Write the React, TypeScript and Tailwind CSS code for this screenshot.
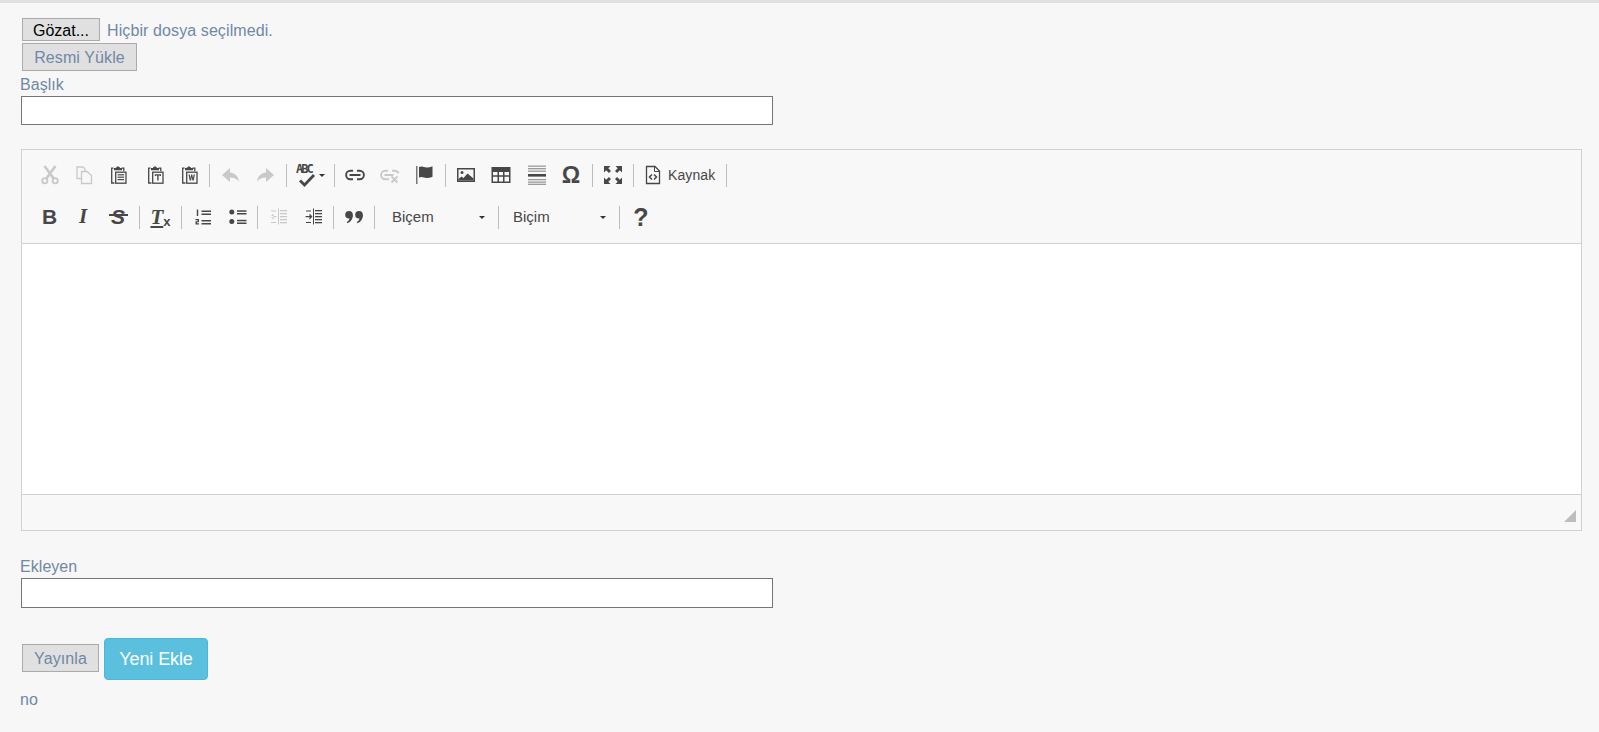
import type { ReactNode } from 'react';

const DARK = '#474747';
const OFF = '#c9c9c9';

function Icon({ color = DARK, children }: { color?: string; children: ReactNode }) {
  return (
    <svg width="20" height="20" viewBox="0 0 20 20" fill={color} stroke="none">
      {children}
    </svg>
  );
}

function Clipboard({ children }: { children: ReactNode }) {
  return (
    <Icon>
      <path d="M4.500 3.200H2.700v14.800h2.800" fill="none" stroke={DARK} strokeWidth="1.300" />
      <path d="M12.500 3.200h2.300v3" fill="none" stroke={DARK} strokeWidth="1.300" />
      <path d="M5 5.200V3h2C7.400 1 10.600 1 11 3h2v2.200z" />
      <rect x="6.700" y="7.200" width="10.300" height="11" fill="none" stroke={DARK} strokeWidth="1.300" />
      {children}
    </Icon>
  );
}

function Lines({ color = DARK, x = 9, w = 9, h = 1.3, ys = [5, 8, 11, 14] }: { color?: string; x?: number; w?: number; h?: number; ys?: number[] }) {
  return (
    <>
      {ys.map((y) => (
        <rect key={y} x={x} y={y} width={w} height={h} fill={color} />
      ))}
    </>
  );
}

const icons: Record<string, ReactNode> = {
  cut: (
    <Icon color={OFF}>
      <path d="M4.500 1 14 14M15.500 1 6 14" fill="none" stroke={OFF} strokeWidth="2.600" />
      <circle cx="4.800" cy="15.800" r="2.600" fill="none" stroke={OFF} strokeWidth="1.800" />
      <circle cx="15.200" cy="15.800" r="2.600" fill="none" stroke={OFF} strokeWidth="1.800" />
    </Icon>
  ),
  copy: (
    <Icon color={OFF}>
      <path d="M7.500 13.500H3V2h6l2 2v2" fill="none" stroke={OFF} strokeWidth="1.300" />
      <path d="M7.500 6.500H13l4.500 4v8h-10z" fill="none" stroke={OFF} strokeWidth="1.300" />
    </Icon>
  ),
  paste: (
    <Clipboard>
      <Lines x={8.600} w={6.500} h={1.200} ys={[9.200, 11.600, 14]} />
    </Clipboard>
  ),
  pasteText: (
    <Clipboard>
      <path d="M8.800 9.300h6.200V11h-1.100v-.5h-1.300v5h-1.400v-5h-1.300v.5H8.800z" />
    </Clipboard>
  ),
  pasteWord: (
    <Clipboard>
      <path d="M8.500 9.600h1.300l.6 3.900.7-3.900h1.200l.7 3.900.6-3.900h1.300l-1.200 5.800h-1.300l-.7-3.400-.7 3.400H9.700z" />
    </Clipboard>
  ),
  undo: (
    <Icon color={OFF}>
      <path d="M9 3 1 10l8 7v-4.500c3.500-.2 6.200.8 9 4-.8-5-3.800-8.500-9-9z" />
    </Icon>
  ),
  redo: (
    <Icon color={OFF}>
      <path d="M11 3l8 7-8 7v-4.500c-3.500-.2-6.200.8-9 4 .8-5 3.800-8.500 9-9z" />
    </Icon>
  ),
  link: (
    <Icon>
      <path d="M8 5.800H5.300a4.200 4.200 0 0 0 0 8.400H8M12 5.800h2.700a4.200 4.200 0 0 1 0 8.400H12" fill="none" stroke={DARK} strokeWidth="1.900" />
      <rect x="4.500" y="9" width="11" height="2" />
    </Icon>
  ),
  unlink: (
    <Icon color={OFF}>
      <path d="M8 5.800H5.300a4.200 4.200 0 0 0 0 8.400H9M12 5.800h2.700a4.200 4.200 0 0 1 3.800 2.500" fill="none" stroke={OFF} strokeWidth="1.900" />
      <rect x="4.500" y="9" width="9" height="2" />
      <path d="m11.500 11.500 6 6m0-6-6 6" fill="none" stroke={OFF} strokeWidth="1.800" />
    </Icon>
  ),
  flag: (
    <Icon>
      <rect x="1" y="1" width="1.500" height="18" fill="#777" />
      <path d="M4 2c3-1.400 5 .2 7.500.4 2 .1 4-.4 6-1.200v10.600c-2 .8-4 1.300-6 1.200-2.500-.2-4.500-1.800-7.500-.4z" />
    </Icon>
  ),
  image: (
    <Icon>
      <path d="M1 3h18v14H1z" />
      <rect x="2.500" y="4.500" width="15" height="11" fill="#f8f8f8" />
      <circle cx="6" cy="7.500" r="1.500" />
      <path d="M2.500 15.500v-1.500l3-2.500 2 1.500 4-4.500 6 5v2z" />
    </Icon>
  ),
  table: (
    <Icon>
      <path d="M0.500 2h19v16h-19z" />
      <path d="M2 7h4.500v3.200H2zM8 7h4v3.200H8zM13.500 7H18v3.200h-4.500zM2 11.700h4.500v4.800H2zM8 11.700h4v4.800H8zM13.500 11.700H18v4.800h-4.500z" fill="#f8f8f8" />
    </Icon>
  ),
  hr: (
    <Icon>
      <Lines color="#9a9a9a" x={1} w={18} ys={[0.500, 3, 5.500, 14, 16.500, 18.700]} />
      <rect x="1" y="9" width="18" height="2.600" />
    </Icon>
  ),
  max: (
    <Icon>
      <path d="M1 1h6.500L5.300 3.200 8 5.900 5.900 8 3.200 5.300 1 7.500zM19 1v6.500l-2.200-2.200L14.100 8 12 5.900l2.700-2.700L12.500 1zM1 19v-6.500l2.200 2.200L5.900 12 8 14.100l-2.700 2.700L7.500 19zM19 19h-6.500l2.200-2.200L12 14.100l2.100-2.100 2.700 2.700 2.200-2.200z" />
    </Icon>
  ),
  source: (
    <Icon>
      <path d="M3.500 1.500h8.500l4.500 4.500v12.500h-13z" fill="none" stroke={DARK} strokeWidth="1.300" />
      <path d="M11.500 1.500v5h5" fill="none" stroke={DARK} strokeWidth="1" />
      <path d="M9 9.500 6.500 12 9 14.500M11 9.500l2.500 2.500-2.500 2.500" fill="none" stroke={DARK} strokeWidth="1.500" />
    </Icon>
  ),
  ol: (
    <Icon>
      <Lines x={8.500} w={9.500} h={1.500} ys={[3.500, 6.500, 13, 16]} />
      <rect x="3.800" y="2.500" width="1.400" height="6.500" />
      <path d="M2.500 12h3.500v3.200H3.900v1.100H6v1.200H2.500v-3.300h2.200v-1H2.500z" />
    </Icon>
  ),
  ul: (
    <Icon>
      <circle cx="3.800" cy="5" r="2.500" />
      <circle cx="3.800" cy="14.500" r="2.500" />
      <Lines x={9} w={9.500} h={1.500} ys={[3.300, 6, 12.800, 15.500]} />
    </Icon>
  ),
  outdent: (
    <Icon color={OFF}>
      <Lines color={OFF} x={11} w={7} ys={[3, 6, 9, 12, 15]} />
      <rect x="9" y="1.500" width="1" height="16" fill={OFF} />
      <path d="M1.500 9h6v1.300h-6zM4.500 6.500 1.500 9.600l3 3.100zM2 3.500h5v1H2zM2 15h5v1H2z" fill={OFF} />
    </Icon>
  ),
  indent: (
    <Icon>
      <Lines x={11} w={7} ys={[3, 6, 9, 12, 15]} />
      <rect x="9" y="1.500" width="1" height="16" />
      <path d="M1.500 9h5v1.300h-5zM5.500 6.500l3 3.100-3 3.100zM2 3.500h5v1H2zM2 15h5v1H2z" />
    </Icon>
  ),
  quote: (
    <Icon>
      <circle cx="5" cy="7.800" r="3.800" />
      <path d="M8.800 7.800c.2 4-1.800 7.200-5.300 8.400l-.8-1.300c2-1 2.800-2.500 2.800-4.500z" />
      <circle cx="15" cy="7.800" r="3.800" />
      <path d="M18.800 7.800c.2 4-1.800 7.200-5.300 8.400l-.8-1.300c2-1 2.800-2.500 2.800-4.500z" />
    </Icon>
  ),
  check: (
    <Icon>
      <path d="M3 12.500 7.500 17 17 7" fill="none" stroke={DARK} strokeWidth="2.800" />
    </Icon>
  ),
};

function Sep() {
  return <span className="w-px h-[23px] bg-[#bcbcbc] shrink-0" />;
}

function Tool({ w, name }: { w: string; name: string }) {
  return <span className={`${w} flex items-center justify-center shrink-0`}>{icons[name]}</span>;
}

function Glyph({ w, className, children }: { w: string; className: string; children: ReactNode }) {
  return <span className={`${w} flex items-center justify-center shrink-0 text-[#474747] ${className}`}>{children}</span>;
}

function Caret() {
  return <span className="w-0 h-0 border-x-[3px] border-x-transparent border-t-[3px] border-t-[#333]" />;
}

function Combo({ label, w }: { label: string; w: string }) {
  return (
    <span className={`${w} flex items-center justify-between shrink-0 pr-[13px] text-[15px] text-[#474747]`}>
      {label}
      <Caret />
    </span>
  );
}

const labelCls = 'block -ml-px text-[16px] tracking-[0.05px] leading-[27px] h-[25px]';
const inputCls = 'block w-[752px] bg-white border border-[#767676]';
const btnCls = 'border border-[#ababab] bg-[#e0e0e0] text-[16px] tracking-[0.1px] pt-[2px] px-0';

export default function App() {
  return (
    <div className="h-[732px] overflow-hidden bg-[#f7f7f7] border-t-[3px] border-[#e0e0e0] font-['Liberation_Sans',Arial,sans-serif] text-[#7088a6]">
      <div className="pl-[21px] pr-[17px] pt-[15px]">
        <div className="flex items-center pl-px h-[23px] gap-[7px]">
          <button className="w-[78px] h-[23px] pt-[2px] border border-[#ababab] bg-[#e0e0e0] text-[16px] leading-none text-black">Gözat...</button>
          <span className="text-[16px] tracking-[0.1px] pt-[2px]">Hiçbir dosya seçilmedi.</span>
        </div>
        <div className="pl-px mt-[2px]">
          <button className={`${btnCls} h-[28px] w-[115px]`}>Resmi Yükle</button>
        </div>
        <label className={labelCls}>Başlık</label>
        <div className={`${inputCls} h-[29px]`} />

        <div className="mt-[24px] h-[382px] flex flex-col border border-[#d1d1d1] bg-[#f8f8f8]">
          <div className="h-[94px] pt-[4px] pl-[10px] shrink-0 border-b border-[#d1d1d1]">
            <div className="flex items-center h-[42px]">
              <Tool w="w-[36px]" name="cut" />
              <Tool w="w-[31px]" name="copy" />
              <Tool w="w-[40px]" name="paste" />
              <Tool w="w-[33px]" name="pasteText" />
              <Tool w="w-[35px]" name="pasteWord" />
              <span className="w-[2px] shrink-0" />
              <Sep />
              <Tool w="w-[41px]" name="undo" />
              <Tool w="w-[28px]" name="redo" />
              <span className="w-[7px] shrink-0" />
              <Sep />
              <span className="w-[47px] h-[24px] shrink-0 relative">
                <span className="text-[12px] leading-none font-['DejaVu_Sans_Mono',monospace] font-bold tracking-[-2px] text-[#474747] absolute top-0 left-[9px]">ABC</span>
                <span className="absolute left-[10px] top-[5px]">{icons.check}</span>
                <span className="absolute left-[32px] top-[11px] flex"><Caret /></span>
              </span>
              <Sep />
              <Tool w="w-[40px]" name="link" />
              <Tool w="w-[30px]" name="unlink" />
              <Tool w="w-[40px]" name="flag" />
              <Sep />
              <Tool w="w-[40px]" name="image" />
              <Tool w="w-[30px]" name="table" />
              <Tool w="w-[41px]" name="hr" />
              <Glyph w="w-[28px]" className="text-[23px] leading-none font-bold">Ω</Glyph>
              <span className="w-[7px] shrink-0" />
              <Sep />
              <Tool w="w-[40px]" name="max" />
              <Sep />
              <span className="w-[92px] shrink-0 flex items-center pl-[9px] gap-[5px] text-[14px] tracking-[0.1px] text-[#474747]">
                {icons.source}
                Kaynak
              </span>
              <Sep />
            </div>
            <div className="flex items-center h-[42px]">
              <Glyph w="w-[35px]" className="text-[21px] font-bold">B</Glyph>
              <Glyph w="w-[32px]" className="text-[21px] font-bold italic font-['Liberation_Serif',serif]">I</Glyph>
              <span className="w-[38px] shrink-0 relative flex items-center justify-center text-[21px] font-bold italic text-[#474747]">
                S
                <span className="absolute left-[10px] right-[9px] top-[13px] h-[2px] bg-[#474747]" />
              </span>
              <span className="w-[2px] shrink-0" />
              <Sep />
              <span className="w-[41px] shrink-0 flex items-center justify-center text-[#474747]">
                <span className="text-[21px] font-bold italic underline font-['Liberation_Serif',serif] leading-none">T</span>
                <span className="text-[13px] font-bold leading-none mt-[8px]">x</span>
              </span>
              <Sep />
              <Tool w="w-[41px]" name="ol" />
              <Tool w="w-[29px]" name="ul" />
              <span className="w-[5px] shrink-0" />
              <Sep />
              <Tool w="w-[41px]" name="outdent" />
              <Tool w="w-[29px]" name="indent" />
              <span className="w-[5px] shrink-0" />
              <Sep />
              <Tool w="w-[40px]" name="quote" />
              <Sep />
              <span className="w-[17px] shrink-0" />
              <Combo label="Biçem" w="w-[106px]" />
              <Sep />
              <span className="w-[14px] shrink-0" />
              <Combo label="Biçim" w="w-[106px]" />
              <Sep />
              <Glyph w="w-[42px]" className="text-[25px] font-bold leading-none">?</Glyph>
            </div>
          </div>
          <div className="h-[250px] bg-white shrink-0" />
          <div className="flex-1 border-t border-[#d1d1d1] flex justify-end items-end pr-[5px] pb-[8px]">
            <svg width="12" height="12" viewBox="0 0 12 12">
              <path d="M12 0v12H0z" fill="#bdbdbd" />
            </svg>
          </div>
        </div>

        <label className={`${labelCls} mt-[22px]`}>Ekleyen</label>
        <div className={`${inputCls} h-[30px]`} />

        <div className="flex items-center pl-px mt-[30px] gap-[5px]">
          <button className={`${btnCls} h-[28px] w-[77px] mb-[2px]`}>Yayınla</button>
          <button className="w-[104px] h-[42px] rounded-[4px] border border-[#46b8da] bg-[#5bc0de] text-white text-[18px] tracking-[-0.1px]">Yeni Ekle</button>
        </div>
        <p className="mt-[11px] -ml-px text-[16px] leading-[18px]">no</p>
      </div>
    </div>
  );
}
